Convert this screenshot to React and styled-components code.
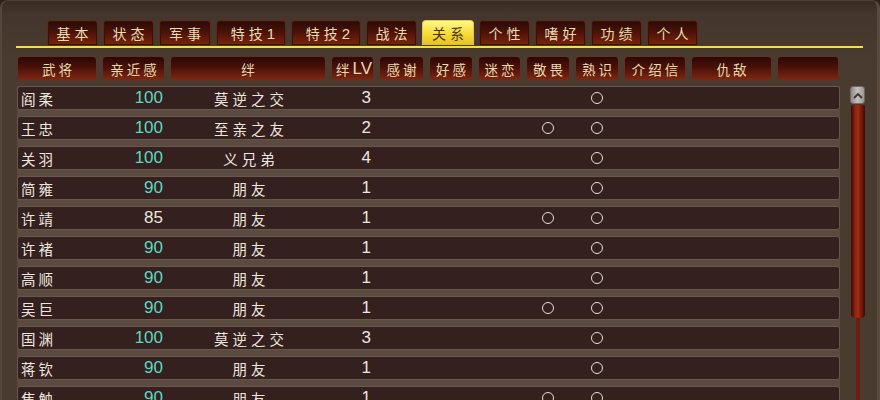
import React from 'react';
import styled, {createGlobalStyle} from 'styled-components';

const GlobalStyle = createGlobalStyle`
  html, body {
    margin: 0;
    padding: 0;
    background: #2c211b;
  }
  body {
    font-family: "Noto Sans CJK SC", "Liberation Sans", sans-serif;
  }
`;

const COLS = '80px 63px 156px 43px 45px 44px 43px 44px 44px 62px 81px 62px';

const Frame = styled.div`
  width: 880px;
  height: 400px;
  overflow: hidden;
  box-sizing: border-box;
  background: linear-gradient(#382b23 0px, #44362c 14px, #4a3b30 60px, #4a3b30 100%);
  border-left: 2px solid #55453a;
  border-right: 3px solid #5a4a3e;
  border-top: 1px solid #4e3e33;
  border-radius: 8px 8px 0 0;
  padding: 19px 14px 0 14px;
`;

const TabBar = styled.div`
  display: flex;
  gap: 5px;
  padding-left: 31px;
  height: 26px;
  border-bottom: 2px solid #f0e040;
`;

const Tab = styled.div`
  height: 25px;
  width: ${p => p.$w}px;
  box-sizing: border-box;
  border-radius: 4px 4px 0 0;
  border: 1px solid ${p => (p.$active ? '#e8c838' : '#5a2a1c')};
  border-bottom: none;
  background: ${p => (p.$active
    ? 'linear-gradient(#fff890, #f8e040 45%, #e8c020)'
    : 'linear-gradient(#2a0a06, #4a1208 45%, #7a2410)')};
  color: ${p => (p.$active ? '#4a3210' : '#eadcb4')};
  font-size: 14px;
  letter-spacing: 4px;
  display: flex;
  align-items: center;
  justify-content: center;
  padding-left: 4px;
  box-shadow: ${p => (p.$active ? 'none' : 'inset 0 0 0 1px #3a1208')};
  span {
    font-family: "Liberation Sans", sans-serif;
    font-size: 15px;
    letter-spacing: 0;
  }
`;

const Body = styled.div`
  display: grid;
  grid-template-columns: 823px 15px;
  column-gap: 10px;
  margin-left: 1px;
`;

const Table = styled.div`
  display: flex;
  flex-direction: column;
`;

const HeaderRow = styled.div`
  display: grid;
  grid-template-columns: ${COLS};
  column-gap: 5px;
  margin-top: 8px;
  margin-bottom: 5px;
`;

const HeadCell = styled.div`
  height: 25px;
  box-sizing: border-box;
  border-radius: 4px;
  border: 1px solid #5c3324;
  background: linear-gradient(#2c0806, #4a1008 45%, #7e2812);
  color: #e8dab0;
  font-size: 13.5px;
  letter-spacing: 3px;
  display: flex;
  align-items: center;
  justify-content: center;
  padding-left: 3px;
  white-space: nowrap;
  span {
    font-family: "Liberation Sans", sans-serif;
    font-size: 17px;
    letter-spacing: 0;
  }
`;

const List = styled.div`
  display: flex;
  flex-direction: column;
  gap: 6px;
  background: #5b4a40;
`;

const Row = styled.div`
  display: grid;
  grid-template-columns: ${COLS};
  column-gap: 5px;
  height: 24px;
  box-sizing: border-box;
  border: 1px solid #6a564a;
  border-radius: 3px;
  background: #34201e;
  align-items: center;
`;

const Name = styled.div`
  color: #ece6de;
  font-size: 14.5px;
  letter-spacing: 3px;
  padding-left: 3px;
  white-space: nowrap;
`;

const Friendly = styled.div`
  color: ${p => (p.$hi ? '#5cd8c2' : '#ece6de')};
  font-family: "Liberation Sans", sans-serif;
  font-size: 17px;
  text-align: right;
  padding-right: 3px;
`;

const Bond = styled.div`
  color: #ece6de;
  font-size: 14.5px;
  letter-spacing: 4px;
  text-align: center;
  padding-left: 4px;
  white-space: nowrap;
`;

const Level = styled.div`
  color: #ece6de;
  font-family: "Liberation Sans", sans-serif;
  font-size: 17px;
  text-align: right;
  padding-right: 4px;
`;

const Mark = styled.div`
  display: flex;
  justify-content: center;
  padding-right: 3px;
  &::after {
    content: '';
    display: ${p => (p.$on ? 'block' : 'none')};
    width: 10px;
    height: 10px;
    border: 1.5px solid #e6ddd6;
    border-radius: 50%;
  }
`;

const Scroll = styled.div`
  display: flex;
  flex-direction: column;
  align-items: center;
  margin-top: 38px;
`;

const UpButton = styled.div`
  width: 15px;
  height: 18px;
  box-sizing: border-box;
  border-radius: 3px;
  background: linear-gradient(90deg, #8e8a88, #c4c0bc 50%, #9a9692);
  border: 1px solid #6e6a66;
  display: flex;
  align-items: center;
  justify-content: center;
`;

const Thumb = styled.div`
  width: 14px;
  height: 213px;
  margin-top: 1px;
  border-radius: 2px 2px 4px 4px;
  background: linear-gradient(90deg, #3a0a06, #8a2410 30%, #a02c12 50%, #7a1e0c 70%, #3a0a06);
`;

const Track = styled.div`
  width: 4px;
  height: 120px;
  background: #6e1c0c;
`;

const tabs = [
  ['基本', 51], ['状态', 51], ['军事', 52], ['特技', 70, '1'], ['特技', 70, '2'], ['战法', 51],
  ['关系', 52, null, true], ['个性', 51], ['嗜好', 51], ['功绩', 51], ['个人', 51],
];

const heads = ['武将', '亲近感', '绊', 'LV', '感谢', '好感', '迷恋', '敬畏', '熟识', '介绍信', '仇敌', ''];

const officers = [
  {name: '阎柔', val: 100, bond: '莫逆之交', lv: 3, awe: false},
  {name: '王忠', val: 100, bond: '至亲之友', lv: 2, awe: true},
  {name: '关羽', val: 100, bond: '义兄弟', lv: 4, awe: false},
  {name: '简雍', val: 90, bond: '朋友', lv: 1, awe: false},
  {name: '许靖', val: 85, bond: '朋友', lv: 1, awe: true},
  {name: '许褚', val: 90, bond: '朋友', lv: 1, awe: false},
  {name: '高顺', val: 90, bond: '朋友', lv: 1, awe: false},
  {name: '吴巨', val: 90, bond: '朋友', lv: 1, awe: true},
  {name: '国渊', val: 100, bond: '莫逆之交', lv: 3, awe: false},
  {name: '蒋钦', val: 90, bond: '朋友', lv: 1, awe: false},
  {name: '焦触', val: 90, bond: '朋友', lv: 1, awe: true},
];

const App = () => {
  return (
      <Frame>
        <GlobalStyle/>
        <TabBar>
          {tabs.map(([label, w, num, active], i) => (
              <Tab key={i} $w={w} $active={active}>
                {label}{num && <span>{num}</span>}
              </Tab>
          ))}
        </TabBar>
        <Body>
          <Table>
            <HeaderRow>
              {heads.map((h, i) => (
                  <HeadCell key={i}>
                    {h === 'LV' ? <>绊<span>LV</span></> : h}
                  </HeadCell>
              ))}
            </HeaderRow>
            <List>
              {officers.map(o => (
                  <Row key={o.name}>
                    <Name>{o.name}</Name>
                    <Friendly $hi={o.val !== 85}>{o.val}</Friendly>
                    <Bond>{o.bond}</Bond>
                    <Level>{o.lv}</Level>
                    <Mark/>
                    <Mark/>
                    <Mark/>
                    <Mark $on={o.awe}/>
                    <Mark $on/>
                    <Mark/>
                    <Mark/>
                    <Mark/>
                  </Row>
              ))}
            </List>
          </Table>
          <Scroll>
            <UpButton>
              <svg width="10" height="7" viewBox="0 0 10 7">
                <path d="M1 6 L5 2 L9 6" fill="none" stroke="#3a3432" strokeWidth="1.8"/>
              </svg>
            </UpButton>
            <Thumb/>
            <Track/>
          </Scroll>
        </Body>
      </Frame>
  );
};

export default App;
